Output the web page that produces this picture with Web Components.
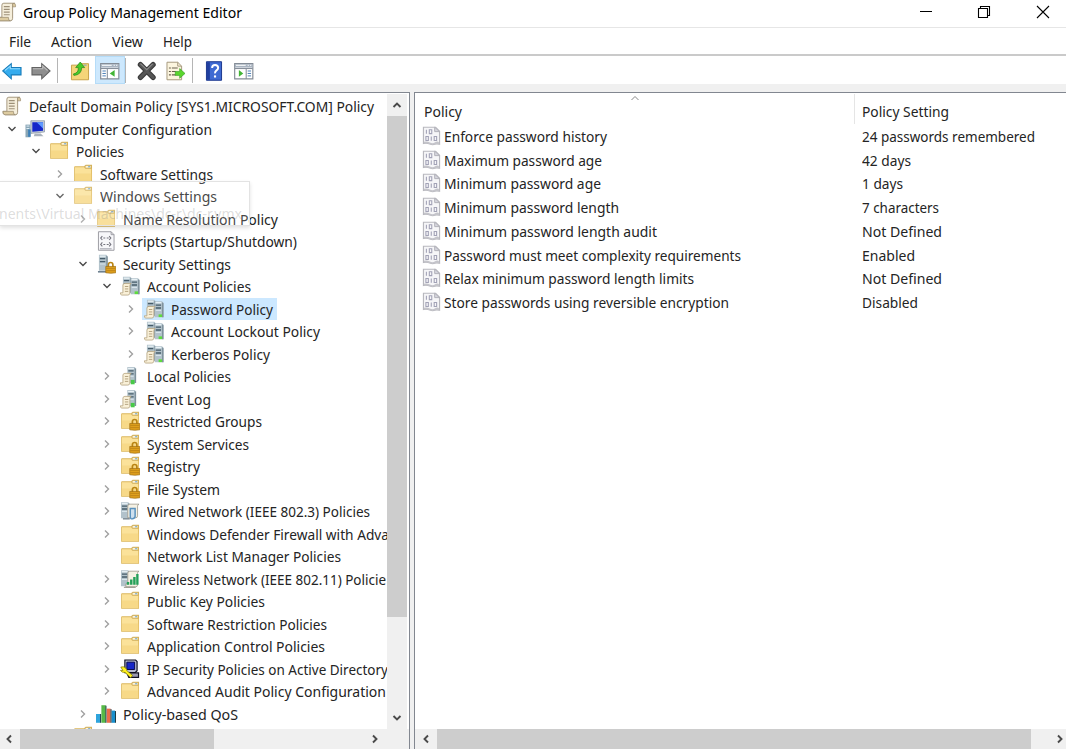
<!DOCTYPE html>
<html lang="en"><head><meta charset="utf-8"><title>Group Policy Management Editor</title>
<style>html,body{margin:0;height:100%;overflow:hidden;background:#fff}</style></head>
<body>
<gp-window></gp-window>
<script>
const folder = `<path d="M1.200 2.500Q1.200 2 2 2h9.500L13 .5h6.500V18H1.200z" fill="#dcb65a"/><path d="M2 3h9.500L13 4.500h5.700v12.700H2z" fill="#fbe29a"/><path d="M2 9.500h16.700v7.700H2z" fill="#f5d47e" opacity=".65"/><path d="M12.500 1.300h6V4h-6z" fill="#fff5d8" stroke="#c9aa5a" stroke-width=".7"/><path d="M15.500 2.600h2" stroke="#5a9bd0"/>`;
const lock = `<path d="M12.700 13v-2.200q0-2.300 2.300-2.300t2.300 2.300V13" fill="none" stroke="#b98413" stroke-width="1.700"/><path d="M10 12.500h10.300V19q-5 1-10.300 0z" fill="#dfa01c" stroke="#9c6c10" stroke-width=".7"/><path d="M10.500 14.500h9.300M10.500 16.800h9.300" stroke="#b87f14" stroke-width=".8"/>`;
const tower = (x, y) => `<g transform="translate(${x} ${y})"><path d="M0 0h7.500l1.500 1.500V16.500H0z" fill="#b2c2cb"/><path d="M7.500 1L9 2v14.500H7.500z" fill="#7d909b"/><path d="M.8 1.500h6" stroke="#e8f1f5" stroke-width="1.300"/><path d="M1 4h5.500M1 7h5.500" stroke="#465c6a" stroke-width="1.400"/><path d="M1 9.500h5.500" stroke="#dae6ec"/></g>`;
const scroll = `<path d="M3 9q.3-1.700 2-1.700h6.500q-1.400.7-1.400 2.400v7.600q-.3 2-2 2H1.800q-1.600-.3-1.500-2.300H3z" fill="#f9f0d8" stroke="#b3a17c" stroke-width=".8"/><path d="M5 10.500h3.500M5 13h3.500M5 15.500h3.500" stroke="#b5a280"/>`;
const ICONS = {
  folder,
  lockfolder: folder + lock,
  scroll: `<path d="M5 3q0-2 2-2h11q-2 .2-2 2v13.500q0 2.500-2.200 2.500H3Q.5 18.700 1 15.500h4z" fill="#f6efdc" stroke="#9a8c70" stroke-width=".9"/><path d="M16 3V1.300q3-.9 3 1.700v1.700h-3zM1 15.500h10.700q-.3 3.500 2 3.500H3Q1 18.500 1 15.500z" fill="#ddcba0" stroke="#96886b" stroke-width=".7"/><path d="M7 4.500h6M7 7.300h6M7 10.100h6M7 12.900h6" stroke="#9d9078" stroke-width="1.100"/>`,
  computer: `<path d="M6 1.500L20 1.500V13L6 14.500z" fill="#c8cfd8" stroke="#83909e" stroke-width=".7"/><path d="M7.500 3l11 0v8.800L7.500 12.700z" fill="#1627c9"/><path d="M12 3h6.500v6.500z" fill="#5f9aff"/><path d="M10 14.500h6l3 3H9z" fill="#aab2bc"/><path d="M.5 5.500h5v13h-5z" fill="#8aa6b5"/><path d="M1.500 7h3M1.500 9.500h3" stroke="#e0f0fa"/><path d="M4.500 10.500v7.500" stroke="#3c80b8" stroke-width="2.600"/>`,
  script: `<path d="M2.500.500h13l3 3v16h-16z" fill="#f7f7fa" stroke="#9b9ba2"/><path d="M15.500.500v3h3" fill="none" stroke="#9b9ba2"/><path d="M6.500 5L4.800 7l1.700 2M13.500 5l1.700 2-1.700 2M6.500 11.500l-1.700 2 1.700 2M13.500 11.500l1.700 2-1.700 2M7.500 7h2M11 7h2M7.500 13.500h2M11 13.500h2" fill="none" stroke="#74747e" stroke-width="1.100"/><path d="M4 18h12" stroke="#9fa0aa"/>`,
  security: tower(3, .5) + `<path d="M2 18h10" stroke="#6e8190" stroke-width="1.600"/>` + lock,
  towers: tower(3, .5) + tower(11, 2) + scroll + `<path d="M15 15.500h3.500v2.800h-3.500z" fill="#5edc3d"/>`,
  server: tower(7.500, .8) + `<path d="M11 14h4v4.500h-4z" fill="#47c948"/>` + scroll,
  wired: tower(1, 1) + `<path d="M8 5q0-2 2-2h9.500q-1.500.5-1.500 2v10q0 2-2 2H8z" fill="#f5f1e4" stroke="#9d978a" stroke-width=".8"/><path d="M10.500 7.500h5v8q0 2-2.500 2.500t-2.500-2.500z" fill="#cfe0ee" stroke="#5a91bd" stroke-width="1.500"/><path d="M3 18h7" stroke="#7d8b95" stroke-width="1.500"/>`,
  wireless: tower(1, 1) + `<path d="M8 4q0-2 2-2h9.500q-1.500.5-1.500 2v12q0 2-2 2H6v-3h2z" fill="#f5f1e4" stroke="#9d978a" stroke-width=".8"/><path d="M7 16v-3h2.500v3zM10.300 16v-5.500h2.500V16zM13.500 16V8H16v8zM16.600 16V5H19v11z" fill="#25a05a"/><path d="M4 18.500h12" stroke="#8c8a80"/>`,
  ipsec: `<path d="M5 .8h11l1.500 1.500v9.500l-2 2H5z" fill="#b9bdd2" stroke="#101020" stroke-width="1.200"/><path d="M7 3h8v7.500H7z" fill="#1828c8" stroke="#080a50"/><path d="M7 14h12v4.500H9z" fill="#9b9bb0" stroke="#101020" stroke-width="1.200"/><path d="M.8 8q3.200-1 5 1t1 2.500l6 5-1.700 2.500-6-5.500Q2 14 .5 11.500l2.500 0z" fill="#fff21d" stroke="#777000" stroke-width=".7"/>`,
  qos: `<path d="M0 10h4.500v9H0z" fill="#2fa4dc"/><path d="M5.500 1H10v18H5.500z" fill="#57b947"/><path d="M11 4.500h4V19h-4z" fill="#ec6c4a"/><path d="M16 6.500h3.500V19H16z" fill="#198fcc"/><path d="M4.700 10v9M10.200 1.500V19M15.400 5v14M20 7v12" stroke="#15343f" stroke-width="1"/>`,
  binary: `<path d="M1.500 1h12.500l4 4v13.500q-3-1-5 0t-5-.3-6.500-.5z" fill="#f6f6f8" stroke="#b8b8be" stroke-width="1.200"/><path d="M13 1v4.500h5z" fill="#d7d7df" stroke="#b0b0b8"/><path d="M2 16q3-1 6 .7t5.500-.2 4 .2v1.800q-3-1-5 0t-5-.3-5.500-.5z" fill="#c4c4ca"/><g fill="none" stroke="#a2a2b6" stroke-width="1.100"><path d="M4.500 3.500v4.300M7.500 3.600h2.500v4H7.500zM4 10.600h2.500v4H4zM9.500 10.500v4.300M12.500 10.600H15v4h-2.500z"/></g>`,
  back: `<path d="M.7 10L9.500 2.500V6.500H19.500v7.500H9.500v4z" fill="#35acee" stroke="#187cb9" stroke-width="1.100"/><path d="M3 9.500L8.500 5v2.700H18.500" fill="none" stroke="#8ed9ff" stroke-width="1.200"/>`,
  forward: `<path d="M19.500 10L11 2.500V6.500H1v7.500h10v4z" fill="#8e8e8e" stroke="#636363" stroke-width="1.100"/><path d="M2 7.700h10V5l5 4.500" fill="none" stroke="#bbb" stroke-width="1.200"/>`,
  up: `<path d="M1.500 4h8l2-1.500H19V19H1.500z" fill="#f5d579" stroke="#c7a148"/><path d="M14 4h3" stroke="#72a5c4"/><path d="M3.500 13q5.500-1 5-6.500H5.800L10.500.8 15 6.500h-3q-.2 7.500-8 8z" fill="#48cb28" stroke="#218419" stroke-width=".7"/>`,
  pane: `<path d="M.7 2.500h18.600v15.500H.7z" fill="#fff" stroke="#848c96" stroke-width="1.200"/><path d="M1 3h18v3.500H1z" fill="#a9b4c1"/><path d="M2 4.200h10M14 4.200h1.200M16.500 4.200h1.200" stroke="#fff"/><path d="M1 7.500h18M7.500 8v10" stroke="#7d8792"/><path d="M2.500 10H6M2.500 12.500H6M2.500 15H6" stroke="#477bb4"/><path d="M15 9v7l-5-3.500z" fill="#42b535"/>`,
  paneR: `<path d="M.7 2.500h18.600v15.500H.7z" fill="#fff" stroke="#848c96" stroke-width="1.200"/><path d="M1 3h18v3.500H1z" fill="#a9b4c1"/><path d="M2 4.200h10M14 4.200h1.200M16.500 4.200h1.200" stroke="#fff"/><path d="M1 7.500h18M12.500 8v10" stroke="#7d8792"/><path d="M14 10h3.500M14 12.500h3.500M14 15h3.500" stroke="#477bb4"/><path d="M5 9v7l4.500-3.500z" fill="#42b535"/>`,
  del: `<path d="M3.500 3.500l13 13M16.500 3.500l-13 13" stroke="#3a3a3a" stroke-width="5.400" stroke-linecap="round"/><path d="M3.500 3.500l13 13M16.500 3.500l-13 13" stroke="#565656" stroke-width="3.200" stroke-linecap="round"/><path d="M3.500 2.500L10 8.700l6-6" fill="none" stroke="#8a8a8a" stroke-width="1.200"/>`,
  export: `<path d="M1 1h11l4 4v14H1z" fill="#fcf5df" stroke="#a5987c"/><path d="M12 1v4h4" fill="none" stroke="#a5987c"/><path d="M3 7h2M3 10.500h2M3 14h2M6 7h6M6 10.500h4M6 14h4" stroke="#69604f" stroke-width="1.100"/><path d="M9.500 10.500h4.500v-3l5.500 5-5.500 5v-3H9.500z" fill="#5bd62e" stroke="#2e9722" stroke-width=".6"/>`,
  help: `<path d="M2.500.500h15.500v19h-15.500z" fill="#3f6ad2" stroke="#1b378d"/><path d="M3 1h3v18H3z" fill="#203f9f"/><path d="M8.300 7q0-3.200 3-3.200T14.500 6.600q0 1.700-1.700 2.800T11.300 12.500" fill="none" stroke="#fff" stroke-width="2"/><path d="M10.200 14.500h2.200v2.200h-2.200z" fill="#fff"/>`
};
const define = (name, css, html, setup) => customElements.define(name, class extends HTMLElement {
  connectedCallback() {
    if (this.shadowRoot) return;
    this.attachShadow({mode: 'open'}).innerHTML = `<style>*{box-sizing:border-box}:host{box-sizing:border-box}${css}</style>${typeof html === 'function' ? html(this) : html}`;
    if (setup) setup(this, this.shadowRoot);
  }
});

define('gp-icon', ':host{display:block;flex:none;width:20px;height:20px}svg{display:block;width:100%;height:100%}',
  el => `<svg viewBox="0 0 20.500 20">${ICONS[el.getAttribute('name')]}</svg>`);

/* A label whose text is condensed to the width given in "w". */
define('gp-label', ':host{display:block;flex:none;white-space:pre}span{display:inline-block;transform-origin:0 50%}', '<span><slot></slot></span>',
  (el, root) => {
    const w = +el.getAttribute('w'), s = root.querySelector('span');
    if (!w) return;
    const scale = w / s.getBoundingClientRect().width;
    s.style.transform = `scaleX(${scale})`;
    el.style.width = w + 'px';
  });

define('gp-chevron', ':host{display:block;flex:none;width:10px;height:10px;color:#4a4a4a}svg{display:block}',
  el => {
    const d = {down: 'M1.500 3L5 6.500 8.500 3', up: 'M1.500 7L5 3.500 8.500 7', right: 'M3 1.500L6.500 5 3 8.500', left: 'M7 1.500L3.500 5 7 8.500'}[el.getAttribute('dir')];
    return `<svg width="10" height="10"><path d="${d}" fill="none" stroke="currentColor" stroke-width="${el.getAttribute('weight') || 1.4}"/></svg>`;
  });

define('gp-titlebar', `:host{display:flex;height:28px;flex:none;align-items:center;border-bottom:1px solid #e6e6e6;padding:0 0 3px;color:#000}
  gp-icon{margin-left:-3px;margin-right:6px}.sp{flex:1}svg{display:block;flex:none}.b{width:58px;display:flex;justify-content:center}.x{width:60px;margin-right:-7px}`,
  `<gp-icon name="scroll"></gp-icon><gp-label w="219">Group Policy Management Editor</gp-label><div class="sp"></div>
  <div class="b"><svg width="14" height="14"><path d="M1 6.500h12" stroke="#000"/></svg></div>
  <div class="b"><svg width="14" height="14"><path d="M1.500 3.500h9v9h-9zM3.500 3V1.500h9v9H11" fill="none" stroke="#000" stroke-width="1.100"/></svg></div>
  <div class="b x"><svg width="14" height="14"><path d="M1 1l12 12M13 1L1 13" stroke="#000" stroke-width="1.100"/></svg></div>`);

define('gp-menubar', ':host{display:flex;flex:none;height:28px;align-items:center;padding-left:9px;gap:20px;border-bottom:2px solid #cacaca;color:#222}',
  '<gp-label w="22">File</gp-label><gp-label w="41">Action</gp-label><gp-label w="31">View</gp-label><gp-label w="29">Help</gp-label>');

define('gp-toolbar', `:host{display:flex;flex:none;height:28px;align-items:center;padding-left:2px}
  :host>gp-icon,.off{position:static}gp-icon{margin-top:2px}i{width:1px;height:25px;background:#b5b5b5}.on{background:#cde8fd;border:1px solid #b5dcf8;width:30px;height:28px;display:flex;align-items:center;justify-content:center}`,
  `<gp-icon name="back"></gp-icon><gp-icon name="forward" style="margin-left:9px"></gp-icon><i style="margin:0 12px 0 6px"></i>
  <gp-icon name="up"></gp-icon><div class="on" style="margin-left:5px"><gp-icon name="pane"></gp-icon></div><i style="margin-right:11px"></i>
  <gp-icon name="del"></gp-icon><gp-icon name="export" style="margin-left:9px"></gp-icon><i style="margin:0 11px 0 6px"></i>
  <gp-icon name="help"></gp-icon><gp-icon name="paneR" style="margin-left:10px"></gp-icon>`);

define('gp-scrollbar', `:host{display:flex;flex:none;background:#f0f0f0;color:#444}:host([vertical]){flex-direction:column;width:20px}:host(:not([vertical])){height:20px}
  .a{flex:none;width:20px;height:22px;display:flex;align-items:center;justify-content:center}:host(:not([vertical])) .a{height:20px}:host(:not([vertical])) .a:first-of-type{padding-right:3px}
  .t{flex:none;background:#cdcdcd}.r{flex:1}`,
  el => {
    const v = el.hasAttribute('vertical'), n = el.getAttribute('thumb');
    return `<div class="a"><gp-chevron weight="1.900" dir="${v ? 'up' : 'left'}"></gp-chevron></div><div class="t" style="${v ? 'height' : 'width'}:${n}px"></div><div class="r"></div><div class="a"><gp-chevron weight="1.900" dir="${v ? 'down' : 'right'}"></gp-chevron></div>`;
  });

define('gp-tree-item', `:host{display:flex;flex:none;height:22.500px;align-items:center}
  gp-chevron{margin-right:8px}.none{visibility:hidden}:host([level="0"]) gp-chevron{display:none}gp-chevron[dir=right]{color:#a0a0a0}
  .sel{display:flex;align-items:center;height:22.500px;padding-right:4px;gap:7px}:host([selected]) .sel{background:#cce8ff;margin-left:-2px;padding-left:2px}`,
  el => {
    const a = n => el.getAttribute(n), st = a('state');
    return `<gp-chevron class="${st === '-' ? 'none' : ''}" dir="${st === 'open' ? 'down' : 'right'}"></gp-chevron><div class="sel"><gp-icon name="${a('icon')}"></gp-icon><gp-label w="${a('w')}">${el.textContent}</gp-label></div>`;
  }, el => {
    const level = +el.getAttribute('level');
    el.style.paddingLeft = (level ? level * 23.8 - 17 + .2 : 2) + 'px';
  });

const TREE = [
  [0, '-', 'scroll', 345, 'Default Domain Policy [SYS1.MICROSOFT.COM] Policy'],
  [1, 'open', 'computer', 160, 'Computer Configuration'],
  [2, 'open', 'folder', 48, 'Policies'],
  [3, 'shut', 'folder', 113, 'Software Settings'],
  [3, 'open', 'folder', 117, 'Windows Settings'],
  [4, 'shut', 'folder', 155, 'Name Resolution Policy'],
  [4, '-', 'script', 174, 'Scripts (Startup/Shutdown)'],
  [4, 'open', 'security', 108, 'Security Settings'],
  [5, 'open', 'towers', 104, 'Account Policies'],
  [6, 'shut', 'towers', 102, 'Password Policy', 1],
  [6, 'shut', 'towers', 149, 'Account Lockout Policy'],
  [6, 'shut', 'towers', 99, 'Kerberos Policy'],
  [5, 'shut', 'server', 84, 'Local Policies'],
  [5, 'shut', 'server', 64, 'Event Log'],
  [5, 'shut', 'lockfolder', 115, 'Restricted Groups'],
  [5, 'shut', 'lockfolder', 102, 'System Services'],
  [5, 'shut', 'lockfolder', 53, 'Registry'],
  [5, 'shut', 'lockfolder', 73, 'File System'],
  [5, 'shut', 'wired', 223, 'Wired Network (IEEE 802.3) Policies'],
  [5, 'shut', 'folder', 242, 'Windows Defender Firewall with Adva'],
  [5, '-', 'folder', 194, 'Network List Manager Policies'],
  [5, 'shut', 'wireless', 239, 'Wireless Network (IEEE 802.11) Policie'],
  [5, 'shut', 'folder', 118, 'Public Key Policies'],
  [5, 'shut', 'folder', 180, 'Software Restriction Policies'],
  [5, 'shut', 'folder', 178, 'Application Control Policies'],
  [5, 'shut', 'ipsec', 241, 'IP Security Policies on Active Directory'],
  [5, 'shut', 'folder', 239, 'Advanced Audit Policy Configuration'],
  [4, 'shut', 'qos', 115, 'Policy-based QoS'],
  [3, '-', 'folder', 0, '']
];
define('gp-tree', `:host{display:flex;flex-direction:column;width:410px;flex:none;border-top:1px solid #828790;border-right:1px solid #828790;background:#f0f0f0}
  .top{display:flex;flex:1;min-height:0;background:#fff;padding-right:2px}.list{width:387px;flex:none;padding-top:2px;overflow:hidden;display:flex;flex-direction:column}
  gp-scrollbar[vertical]{margin-top:1px}.h{width:385px}`,
  `<div class="top"><div class="list">${TREE.map(([l, s, i, w, t, sel]) => `<gp-tree-item level="${l}" state="${s}" icon="${i}" w="${w}" ${sel ? 'selected' : ''}>${t}</gp-tree-item>`).join('')}</div><gp-scrollbar vertical thumb="501"></gp-scrollbar></div><gp-scrollbar class="h" thumb="194"></gp-scrollbar>`);

define('gp-policy', `:host{display:flex;flex:none;height:23.750px;align-items:center}gp-icon{margin-right:2px}.n{width:418px;flex:none}`,
  el => `<gp-icon name="binary"></gp-icon><div class="n"><gp-label w="${el.getAttribute('w')}">${el.textContent}</gp-label></div><gp-label w="${el.getAttribute('vw')}">${el.getAttribute('value')}</gp-label>`);

const POLICIES = [
  ['Enforce password history', 163, '24 passwords remembered', 173],
  ['Maximum password age', 158, '42 days', 49],
  ['Minimum password age', 157, '1 days', 41],
  ['Minimum password length', 175, '7 characters', 77],
  ['Minimum password length audit', 213, 'Not Defined', 80],
  ['Password must meet complexity requirements', 297, 'Enabled', 53],
  ['Relax minimum password length limits', 250, 'Not Defined', 80],
  ['Store passwords using reversible encryption', 285, 'Disabled', 56]
];
define('gp-details', `:host{display:flex;flex-direction:column;flex:1;min-width:0;border-top:1px solid #828790;border-left:1px solid #828790;background:#fff}
  .head{display:flex;height:31px;flex:none;align-items:center;padding-left:8.500px;position:relative}.c1{width:430px;flex:none}.c2{border-left:1px solid #e5e5e5;height:30px;padding:7px 0 0 7px}
  .sort{position:absolute;left:215px;top:0;color:#888}.rows{flex:1;padding-left:6.500px;display:flex;flex-direction:column}.head gp-label{padding-top:4px}.c2 gp-label{padding-top:0}
  .hs{background:#f0f0f0;padding-left:2px;overflow:hidden}gp-scrollbar{margin-right:-4px}`,
  `<div class="head"><div class="c1"><gp-label w="38">Policy</gp-label></div><div class="c2"><gp-label w="87">Policy Setting</gp-label></div><gp-chevron class="sort" dir="up" weight="1"></gp-chevron></div>
  <div class="rows">${POLICIES.map(([n, w, v, vw]) => `<gp-policy w="${w}" value="${v}" vw="${vw}">${n}</gp-policy>`).join('')}</div><div class="hs"><gp-scrollbar thumb="594"></gp-scrollbar></div>`);

define('gp-ghost-tip', `:host{position:absolute;left:0;top:181px;width:250px;height:45px;background:rgba(255,255,255,.17);border:1px solid #e3e3e3;border-left:0;box-shadow:0 2px 4px rgba(0,0,0,.12);display:flex;align-items:flex-end;padding-bottom:2px;color:rgba(110,110,110,.24)}gp-label{margin-left:-1px}`,
  '<gp-label w="243">nents\\Virtual Machines\\dc-r\\dc-r.vmx</gp-label>');

define('gp-window', `:host{display:flex;flex-direction:column;position:relative;width:1066px;height:749px;overflow:hidden;background:#fff;font:14.500px/20px "Noto Sans","Open Sans",sans-serif;color:#242424}
  .panes{display:flex;flex:1;min-height:0;gap:4px;padding-top:8px;background:#f0f0f0}`,
  '<gp-titlebar></gp-titlebar><gp-menubar></gp-menubar><gp-toolbar></gp-toolbar><div class="panes"><gp-tree></gp-tree><gp-details></gp-details></div><gp-ghost-tip></gp-ghost-tip>');
</script>
</body></html>
